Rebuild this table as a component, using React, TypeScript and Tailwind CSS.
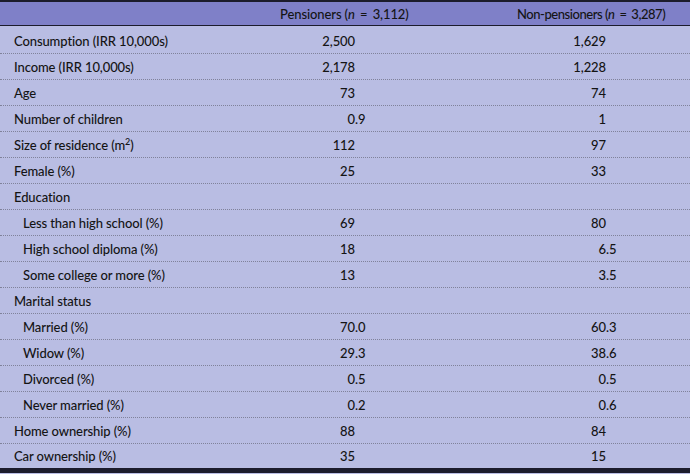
import React from "react";

type Row = { label: React.ReactNode; a?: string; b?: string; sub?: boolean };

const rows: Row[] = [
  { label: "Consumption (IRR 10,000s)", a: "2,500", b: "1,629" },
  { label: "Income (IRR 10,000s)", a: "2,178", b: "1,228" },
  { label: "Age", a: "73", b: "74" },
  { label: "Number of children", a: "0.9", b: "1" },
  {
    label: (
      <>
        Size of residence (m<span className="text-[9px] align-top leading-none relative top-[1px]">2</span>)
      </>
    ),
    a: "112",
    b: "97",
  },
  { label: "Female (%)", a: "25", b: "33" },
  { label: "Education" },
  { label: "Less than high school (%)", a: "69", b: "80", sub: true },
  { label: "High school diploma (%)", a: "18", b: "6.5", sub: true },
  { label: "Some college or more (%)", a: "13", b: "3.5", sub: true },
  { label: "Marital status" },
  { label: "Married (%)", a: "70.0", b: "60.3", sub: true },
  { label: "Widow (%)", a: "29.3", b: "38.6", sub: true },
  { label: "Divorced (%)", a: "0.5", b: "0.5", sub: true },
  { label: "Never married (%)", a: "0.2", b: "0.6", sub: true },
  { label: "Home ownership (%)", a: "88", b: "84" },
  { label: "Car ownership (%)", a: "35", b: "15" },
];

// split a number at the decimal point so the columns line up on it
function split(v?: string) {
  if (!v) return ["", ""];
  const i = v.indexOf(".");
  return i < 0 ? [v, ""] : [v.slice(0, i), v.slice(i)];
}

export default function App() {
  return (
    <div
      className="w-[690px] h-[474px] bg-[#b9bde3] text-[13px] text-[#141414] overflow-hidden [font-variant-ligatures:none] tracking-[-0.1px]"
      style={{ fontFamily: 'Lato, "Noto Sans", sans-serif' }}
    >
      <div className="h-[26px] bg-[#7f80c8] border-t-2 border-b border-[#1c1c2c] grid grid-cols-[280px_237px_1fr] items-center pt-[2px] font-medium">
        <span />
        <span>
          Pensioners (<i>n</i> <span className="mx-[2px]">=</span> 3,112)
        </span>
        <span className="tracking-[-0.45px]">
          Non-pensioners (<i>n</i> <span className="mx-[2px]">=</span> 3,287)
        </span>
      </div>

      <div className="pt-[2px]">
        {rows.map((r, idx) => {
          const last = idx === rows.length - 1;
          const [ai, af] = split(r.a);
          const [bi, bf] = split(r.b);
          return (
            <div
              key={idx}
              className={
                "grid grid-cols-[300px_55px_196px_55px_1fr] items-center pt-[2px] font-medium " +
                (last
                  ? "h-[29px] border-b-[5px] border-[#1c1c2c]"
                  : "h-[26px] border-b border-dotted border-[#80829a]")
              }
            >
              <span className={r.sub ? "pl-[23px]" : "pl-[14px]"}>{r.label}</span>
              <span className="text-right">{ai}</span>
              <span>{af}</span>
              <span className="text-right">{bi}</span>
              <span>{bf}</span>
            </div>
          );
        })}
      </div>
    </div>
  );
}
